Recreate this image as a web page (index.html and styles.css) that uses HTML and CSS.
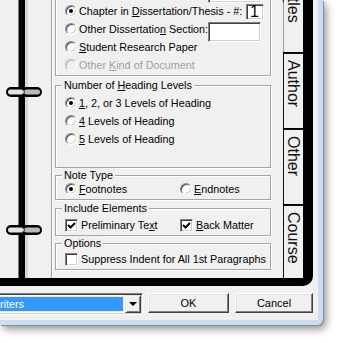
FILE: index.html
```html
<!DOCTYPE html>
<html lang="en">
<head>
    <meta charset="UTF-8">
    <meta name="viewport" content="width=device-width, initial-scale=1.0">
    <title>Document Settings</title>
    <link rel="stylesheet" href="styles.css">
</head>
<body>
    <div class="window">
        <div class="binder">
            <div class="gutter">
                <div class="spine"></div>
                <svg class="ring ring-top" width="38" height="12" viewBox="0 0 38 12">
                    <rect x="1" y="1" width="36" height="10" rx="5" fill="#000"/>
                    <rect x="3" y="3.5" width="16" height="5" rx="2.5" fill="#e4e4e4"/>
                    <rect x="19" y="3.5" width="16" height="5" rx="2.5" fill="#b8b8b8"/>
                    <path d="M17 3.5 L20 6 L17 8.5" stroke="#444" fill="none"/>
                </svg>
                <svg class="ring ring-bottom" width="38" height="12" viewBox="0 0 38 12">
                    <rect x="1" y="1" width="36" height="10" rx="5" fill="#000"/>
                    <rect x="3" y="3.5" width="16" height="5" rx="2.5" fill="#e4e4e4"/>
                    <rect x="19" y="3.5" width="16" height="5" rx="2.5" fill="#b8b8b8"/>
                    <path d="M17 3.5 L20 6 L17 8.5" stroke="#444" fill="none"/>
                </svg>
            </div>

            <div class="panel">
                <div class="group group-doc">
                    <div class="row">
                        <span class="field field-wide"></span>
                    </div>
                    <div class="row">
                        <span class="radio checked"></span><span>Chapter in <u>D</u>issertation/Thesis - #:</span>
                        <span class="field field-num">1</span>
                    </div>
                    <div class="row">
                        <span class="radio"></span><span>Other Dissertatio<u>n</u> Section:</span>
                        <span class="field field-wide field-low"></span>
                    </div>
                    <div class="row">
                        <span class="radio"></span><span><u>S</u>tudent Research Paper</span>
                    </div>
                    <div class="row disabled">
                        <span class="radio"></span><span>Other <u>K</u>ind of Document</span>
                    </div>
                </div>

                <div class="group group-levels">
                    <div class="group-label">Number of <u>H</u>eading Levels</div>
                    <div class="rows">
                        <div class="row"><span class="radio checked"></span><span><u>1</u>, 2, or 3 Levels of Heading</span></div>
                        <div class="row"><span class="radio"></span><span><u>4</u> Levels of Heading</span></div>
                        <div class="row"><span class="radio"></span><span><u>5</u> Levels of Heading</span></div>
                    </div>
                </div>

                <div class="group group-notes">
                    <div class="group-label">Note Type</div>
                    <div class="pair">
                        <div class="row"><span class="radio checked"></span><span><u>F</u>ootnotes</span></div>
                        <div class="row"><span class="radio"></span><span><u>E</u>ndnotes</span></div>
                    </div>
                </div>

                <div class="group group-include">
                    <div class="group-label">Include Elements</div>
                    <div class="pair">
                        <div class="row">
                            <span class="check"><svg width="9" height="9" viewBox="0 0 9 9"><path d="M1 4 L3.5 6.5 L8 2" stroke="#000" stroke-width="2" fill="none"/></svg></span><span>Preliminary Te<u>x</u>t</span>
                        </div>
                        <div class="row">
                            <span class="check"><svg width="9" height="9" viewBox="0 0 9 9"><path d="M1 4 L3.5 6.5 L8 2" stroke="#000" stroke-width="2" fill="none"/></svg></span><span><u>B</u>ack Matter</span>
                        </div>
                    </div>
                </div>

                <div class="group group-options">
                    <div class="group-label">Options</div>
                    <div class="row"><span class="check"></span><span>Suppress Indent for All 1st Paragraphs</span></div>
                </div>
            </div>

            <div class="tabs">
                <div class="tab tab-active"><span>Ti<u>t</u>les</span></div>
                <div class="tab"><span><u>A</u>uthor</span></div>
                <div class="tab"><span><u>O</u>ther</span></div>
                <div class="tab tab-last"><span><u>C</u>ourse</span></div>
            </div>
        </div>

        <div class="footer">
            <div class="combo">
                <span class="combo-text">riters</span>
                <span class="combo-btn"><span class="arrow"></span></span>
            </div>
            <button class="btn btn-ok">OK</button>
            <button class="btn btn-cancel">Cancel</button>
        </div>
    </div>
</body>
</html>
```

FILE: styles.css
```css
* {
    box-sizing: border-box;
}

body {
    margin: 0;
    width: 347px;
    height: 343px;
    overflow: hidden;
    background: #fff;
    font: 10.8px "Liberation Sans", Arial, sans-serif;
    color: #000;
}

u {
    text-underline-offset: 1px;
}

.window {
    width: 323px;
    height: 325px;
    background: #f0f0f0;
    border-right: 5px solid #cddcee;
    border-bottom: 5px solid #cddcee;
    border-bottom-right-radius: 6px;
    box-shadow: 1px 1px 0 #7d90aa, 3px 4px 9px rgba(0, 0, 0, 0.45);
}

/* binder with rings and tabs */
.binder {
    display: flex;
    width: 313px;
    height: 286px;
    border-right: 10px solid #000;
    border-bottom: 8px solid #000;
    border-bottom-right-radius: 10px;
}

.gutter {
    position: relative;
    width: 51px;
    flex: none;
}

.spine {
    margin-left: 18px;
    width: 10px;
    height: 100%;
    background: #000;
    border-left: 1px solid #7a7a7a;
    border-right: 3px solid #d6d6d6;
}

.ring {
    position: absolute;
    left: 5px;
}

.ring-top { top: 86px; }
.ring-bottom { top: 224px; }

.panel {
    width: 232px;
    flex: none;
    display: flex;
    flex-direction: column;
    padding: 0 12px 0 3px;
    border-left: 1px solid #a0a0a0;
    box-shadow: inset 1px 0 #fff;
}

.group {
    flex: none;
    border: 1px solid #a5a5a5;
    box-shadow: inset 1px 1px #fff, 1px 1px #fff;
}

.group-label {
    display: table;
    margin: -8px 0 0 6px;
    padding: 0 2px;
    line-height: 14px;
    background: #f0f0f0;
}

.group-doc {
    margin-top: -23px;
    height: 99px;
    padding-top: 6px;
}

.group-levels {
    margin-top: 9px;
    height: 83px;
}

.group-levels .rows {
    margin-top: 2px;
}

.group-notes {
    margin-top: 7px;
    height: 25px;
}

.group-notes .pair {
    margin-top: -1px;
}

.group-include {
    margin-top: 8px;
    height: 28px;
}

.group-include .pair {
    margin-top: 2px;
}

.group-options {
    margin-top: 7px;
    height: 27px;
}

.group-options .row {
    margin-top: 1px;
}

.row {
    display: flex;
    align-items: center;
    height: 18px;
    padding-left: 9px;
    white-space: nowrap;
}

.group-notes .row,
.group-include .row,
.group-options .row {
    height: 16px;
}

.pair {
    display: grid;
    grid-template-columns: 124px auto;
}

.pair .row + .row {
    padding-left: 0;
}

.disabled {
    color: #a0a0a0;
}

.radio {
    position: relative;
    width: 12px;
    height: 12px;
    margin-right: 2px;
    flex: none;
    border-radius: 50%;
    background: #fff;
    border: 1px solid;
    border-color: #8a8a8a #fff #fff #8a8a8a;
    box-shadow: inset 1px 1px #505050, inset -1px -1px #d4d0c8;
}

.disabled .radio {
    background: #f0f0f0;
    border-color: #b8b8b8 #fff #fff #b8b8b8;
    box-shadow: inset 1px 1px #c8c8c8, inset -1px -1px #e8e8e8;
}

.radio.checked::after {
    content: "";
    position: absolute;
    left: 3px;
    top: 3px;
    width: 4px;
    height: 4px;
    border-radius: 50%;
    background: #000;
}

.check {
    display: flex;
    align-items: center;
    justify-content: center;
    width: 13px;
    height: 13px;
    margin-right: 3px;
    flex: none;
    background: #fff;
    border: 1px solid;
    border-color: #808080 #fff #fff #808080;
    box-shadow: inset 1px 1px #404040, inset -1px -1px #d4d0c8;
}

.field {
    flex: none;
    margin-left: auto;
    background: #fff;
    border: 1px solid;
    border-color: #808080 #fff #fff #808080;
    box-shadow: inset 1px 1px #404040, inset -1px -1px #d4d0c8;
}

.field-wide {
    width: 53px;
    height: 20px;
    margin-right: 9px;
}

.field-low {
    margin-top: 6px;
}

.field-num {
    width: 18px;
    height: 16px;
    margin-top: 2px;
    margin-right: 6px;
    padding-left: 3px;
    font-size: 16px;
    line-height: 14px;
}

/* vertical tabs */
.tabs {
    width: 20px;
    flex: none;
    display: flex;
    flex-direction: column;
    background: #000;
}

.tab {
    height: 75px;
    flex: none;
    padding-top: 6px;
    background: #f0f0f0;
    border-top: 1px solid #111;
    border-left: 1px solid #111;
    writing-mode: vertical-rl;
    font-size: 16px;
    line-height: 19px;
    color: #111;
}

.tab + .tab {
    margin-top: 1px;
}

.tab u {
    text-underline-position: left;
}

.tab-active {
    margin-top: -23px;
    border-top: none;
    border-left: 1px solid #a0a0a0;
    padding-top: 8px;
}

.tab-last {
    flex: 1;
}

/* bottom bar */
.footer {
    display: flex;
    align-items: flex-start;
    padding-top: 7px;
    height: 34px;
}

.combo {
    display: flex;
    align-items: center;
    width: 153px;
    height: 22px;
    margin-left: -10px;
    padding: 2px 1px 2px 2px;
    background: #fff;
    border: 1px solid;
    border-color: #808080 #fff #fff #808080;
    box-shadow: inset 1px 1px #404040, inset -1px -1px #d4d0c8;
}

.combo-text {
    flex: 1;
    height: 14px;
    margin: 0 2px 0 1px;
    padding-left: 6px;
    line-height: 14px;
    background: #3399ff;
    color: #fff;
    outline: 1px dotted #f3d98a;
}

.combo-btn {
    display: flex;
    align-items: center;
    justify-content: center;
    width: 16px;
    height: 18px;
    background: #f0f0f0;
    border: 1px solid;
    border-color: #e3e3e3 #404040 #404040 #e3e3e3;
    box-shadow: inset 1px 1px #fff, inset -1px -1px #808080;
}

.arrow {
    width: 0;
    height: 0;
    border-left: 4px solid transparent;
    border-right: 4px solid transparent;
    border-top: 4px solid #000;
}

.btn {
    height: 20px;
    padding: 0;
    font: 11px "Liberation Sans", Arial, sans-serif;
    color: #000;
    background: #f0f0f0;
    border: 1px solid;
    border-color: #fff #404040 #404040 #fff;
    box-shadow: inset -1px -1px #808080, inset 1px 1px #e3e3e3;
}

.btn-ok {
    width: 81px;
    margin-left: 5px;
}

.btn-cancel {
    width: 78px;
    margin-left: 6px;
}
```
